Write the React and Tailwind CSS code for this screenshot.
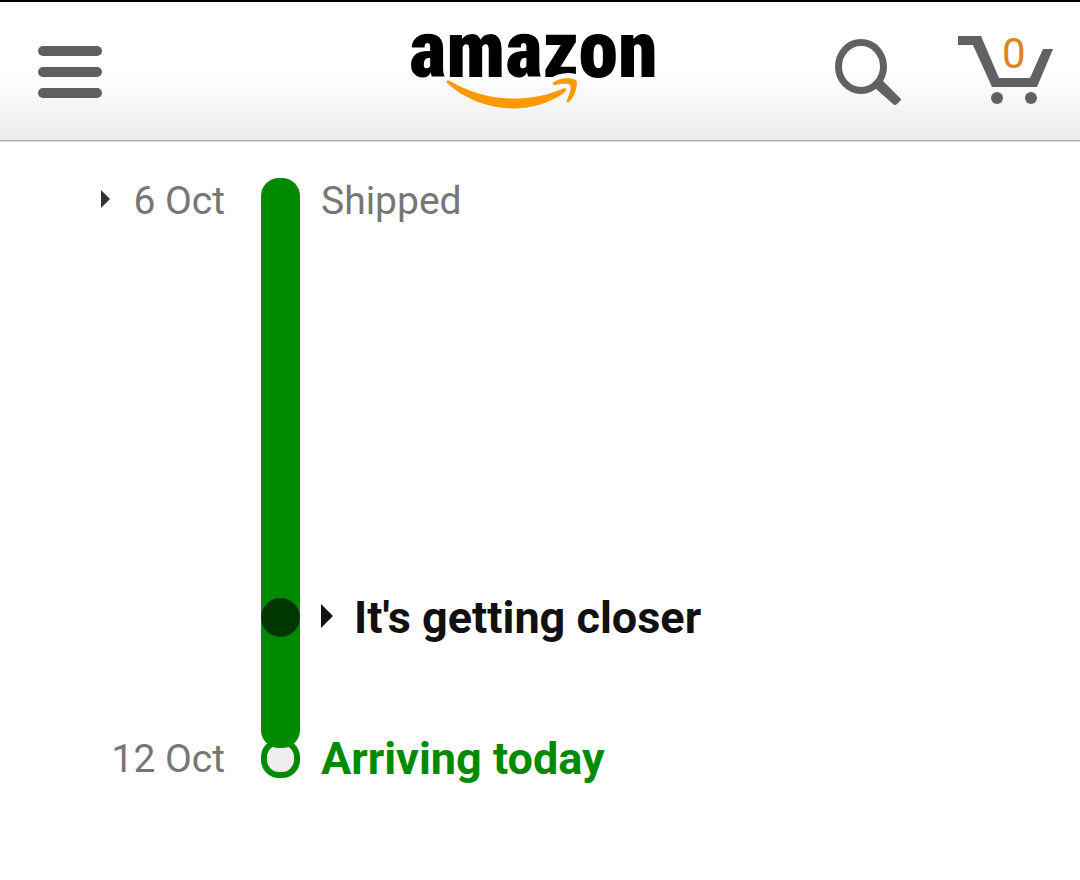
import React from 'react';
import clsx from 'clsx';

const Caret = ({ className }) => (
  <svg viewBox="0 0 12 24" className={clsx('mb-1 shrink-0', className)} fill="currentColor" aria-hidden="true">
    <path d="M0 0 12 12 0 24Z" />
  </svg>
);

const Logo = () => (
  <a href="#home" aria-label="amazon home" className="relative block h-[100px] w-[250px]">
    <span className="block font-['Roboto_Condensed',sans-serif] text-[80px] leading-20 font-black text-black">
      amazon
    </span>
    <svg viewBox="0 0 250 100" className="absolute top-0 left-0 h-[100px] w-[250px]" aria-hidden="true">
      {/* notch under the z, then smile and arrow head */}
      <path d="M141 69C150 62 163 61 175 67V70H141Z" fill="#fdfdfd" />
      <path d="M38 73C37 71 38 70 41 71C73 90 115 95 153 79C157 77 159 80 155 83C119 108 68 101 38 73Z" fill="#ff9900" />
      <path d="M144 73C149 68 160 67 167 70C170 74 165 88 160 92C158 93 157 92 158 90C160 85 163 78 161 75C158 73 151 74 146 75C144 75 143 74 144 73Z" fill="#ff9900" />
    </svg>
  </a>
);

const Header = () => (
  <header className="grid h-[141px] grid-cols-[1fr_auto_1fr] border-t-2 border-b border-t-black border-b-[#aaaaaa] bg-linear-to-b from-white from-50% to-[#ececec] shadow-[0_1px_1px_#e2e2e2]">
    <button type="button" aria-label="Menu" className="mt-11 ml-[38px] flex h-[52px] w-16 flex-col justify-between">
      <span className="h-[10px] w-full rounded-[5px] bg-[#5f5f5f]" />
      <span className="h-[10px] w-full rounded-[5px] bg-[#5f5f5f]" />
      <span className="h-[10px] w-full rounded-[5px] bg-[#5f5f5f]" />
    </button>

    <div className="pt-2 pr-3">
      <Logo />
    </div>

    <div className="flex justify-end gap-14 pt-8 pr-[26px]">
      <button type="button" aria-label="Search" className="mt-1 h-[68px] w-[68px]">
        <svg viewBox="0 0 68 68" className="h-[68px] w-[68px]">
          <ellipse cx="27" cy="28.500" rx="22.500" ry="24" fill="none" stroke="#5f6163" strokeWidth="7" />
          <path d="M48 42 66 60Q68 62 66 63L63 66Q61 68 59 66L41 50Z" fill="#5f6163" />
        </svg>
      </button>
      <button type="button" className="relative h-[72px] w-[96px]">
        <svg viewBox="0 0 96 72" className="h-[72px] w-[96px]" fill="#5f6163" aria-hidden="true">
          <path d="M0 2H23L41 44H72L85 15H95L79 53H34L15 11H0Z" />
          <circle cx="39" cy="64" r="6" />
          <circle cx="73" cy="64" r="6" />
        </svg>
        <span className="absolute top-0 left-11 text-[42px] leading-10 text-[#dd831f]">0</span>
      </button>
    </div>
  </header>
);

// rowClass sets how far the next stop sits below this one
const STOPS = [
  { date: '6 Oct', label: 'Shipped', kind: 'start', rowClass: 'h-[420px]' },
  { date: '', label: "It's getting closer", kind: 'current', rowClass: 'h-[141px]' },
  { date: '12 Oct', label: 'Arriving today', kind: 'end', rowClass: 'h-10' },
];

const Track = ({ kind }) => {
  if (kind === 'start') {
    return <div className="h-full rounded-t-[18px] bg-[#008a00]" />;
  }
  if (kind === 'current') {
    return (
      <div className="relative z-10 h-[150px] rounded-b-[18px] bg-[#008a00]">
        <div className="size-[39px] rounded-full bg-[#003700]" />
      </div>
    );
  }
  return <div className="size-[39px] rounded-[18px] border-[6px] border-[#008a00] bg-[#eeeeee]" />;
};

const Stop = ({ date, label, kind, rowClass }) => {
  const lineClass = kind === 'start' ? 'h-[46px]' : 'h-10';

  return (
    <li className={clsx('grid grid-cols-[225px_36px_39px_21px_1fr]', rowClass)}>
      <div className={clsx('flex items-center justify-end gap-[23px] text-[39px] text-[#767676]', lineClass)}>
        {kind === 'start' && <Caret className="h-[18px] w-[9px] text-[#333333]" />}
        {date && <time>{date}</time>}
      </div>
      <div className="col-start-3">
        <Track kind={kind} />
      </div>
      <div
        className={clsx(
          'col-start-5 flex items-center',
          lineClass,
          kind === 'start' && 'text-[39px] text-[#767676]',
          kind === 'current' && 'gap-[21px] text-[45px] font-bold text-[#111111]',
          kind === 'end' && 'text-[45px] font-bold text-[#008a00]'
        )}
      >
        {kind === 'current' && <Caret className="h-6 w-3" />}
        <span>{label}</span>
      </div>
    </li>
  );
};

const App = () => (
  <div className="min-h-screen bg-white font-[Roboto,sans-serif]">
    <Header />
    <main className="pt-[37px]">
      <ol>
        {STOPS.map((stop) => (
          <Stop key={stop.label} {...stop} />
        ))}
      </ol>
    </main>
  </div>
);

export default App;
